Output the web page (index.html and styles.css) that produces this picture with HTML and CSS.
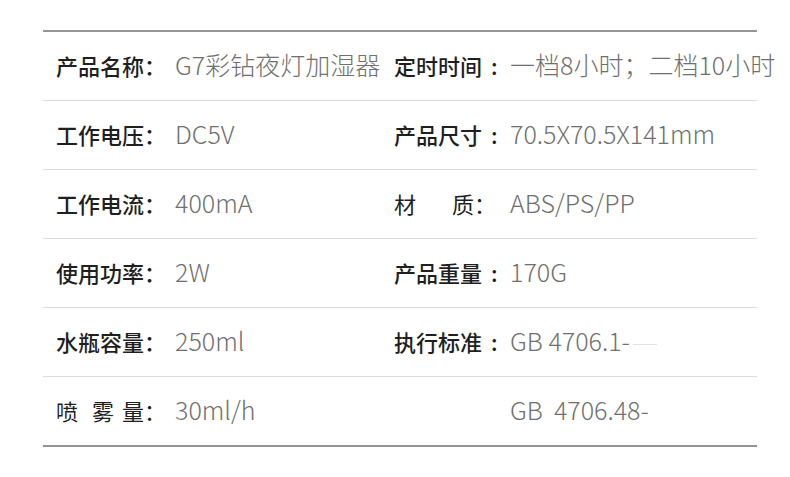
FILE: index.html
```html
<!DOCTYPE html>
<html lang="zh">
<head>
<meta charset="utf-8">
<link rel="stylesheet" href="styles.css">
</head>
<body>
<div class="spec">
  <div class="row">
    <div class="cell left"><span class="label">产品名称：</span><span class="value">G7彩钻夜灯加湿器</span></div>
    <div class="cell right"><span class="label">定时时间<span class="colon">:</span></span><span class="value">一档8小时；二档10小时</span></div>
  </div>
  <div class="row">
    <div class="cell left"><span class="label">工作电压：</span><span class="value">DC5V</span></div>
    <div class="cell right"><span class="label">产品尺寸<span class="colon">:</span></span><span class="value">70.5X70.5X141mm</span></div>
  </div>
  <div class="row">
    <div class="cell left"><span class="label">工作电流：</span><span class="value">400mA</span></div>
    <div class="cell right"><span class="label label-light">材<span class="gap-wide">质：</span></span><span class="value">ABS/PS/PP</span></div>
  </div>
  <div class="row">
    <div class="cell left"><span class="label">使用功率：</span><span class="value">2W</span></div>
    <div class="cell right"><span class="label">产品重量<span class="colon">:</span></span><span class="value">170G</span></div>
  </div>
  <div class="row">
    <div class="cell left"><span class="label">水瓶容量：</span><span class="value">250ml</span></div>
    <div class="cell right"><span class="label">执行标准<span class="colon">:</span></span><span class="value">GB 4706.1-<span class="faded"></span></span></div>
  </div>
  <div class="row">
    <div class="cell left"><span class="label label-light">喷<span class="gap-a">雾</span><span class="gap-b">量：</span></span><span class="value">30ml/h</span></div>
    <div class="cell right"><span class="label"></span><span class="value">GB&nbsp; 4706.48-</span></div>
  </div>
</div>
</body>
</html>
```

FILE: styles.css
```css
html, body {
  margin: 0;
  padding: 0;
  background: #ffffff;
}

body {
  font-family: "Noto Sans CJK SC", "Noto Sans", sans-serif;
  font-size: 22px;
  padding-top: 30px;
}

.spec {
  margin-left: 43px;
  width: 714px;
  border-top: 2px solid #959595;
  border-bottom: 2px solid #959595;
}

.row {
  display: grid;
  grid-template-columns: 351px 363px;
  height: 68px;
  border-bottom: 1px solid #dcdcdc;
}

.row:last-child {
  border-bottom: none;
}

.cell {
  display: flex;
  align-items: center;
  white-space: nowrap;
  overflow: visible;
  padding-bottom: 3px;
}

.left {
  padding-left: 13px;
}

.left .label {
  width: 119px;
}

.right .label {
  width: 116px;
}

.label {
  flex: none;
  color: #1f1f1f;
  font-weight: 500;
  line-height: 1;
}

.label-light {
  font-weight: 400;
}

.colon {
  display: inline-block;
  margin-left: 9px;
}

.gap-wide {
  margin-left: 36px;
}

.gap-a {
  margin-left: 14px;
}

.gap-b {
  margin-left: 8px;
}

.value {
  color: #707070;
  font-weight: 300;
  font-size: 25px;
  line-height: 1;
}

.faded {
  display: inline-block;
  width: 24px;
  height: 1px;
  background: #e2e2e2;
  margin-left: 3px;
  vertical-align: middle;
}
```
